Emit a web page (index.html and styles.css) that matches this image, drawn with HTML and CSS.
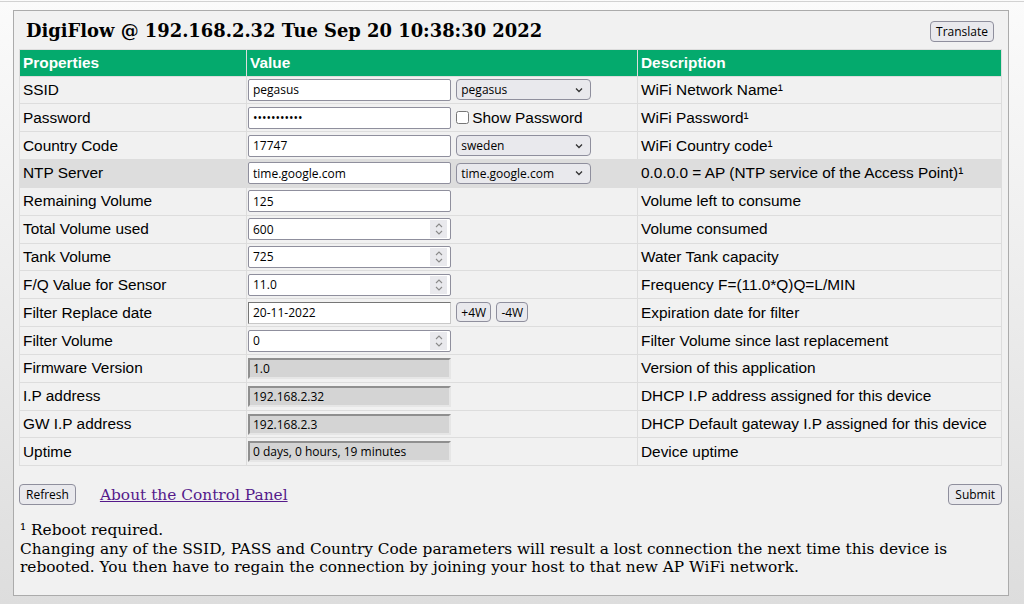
FILE: index.html
```html
<!DOCTYPE html>
<html lang="en">
<head>
<meta charset="utf-8"/>
<meta name="viewport" content="width=device-width, initial-scale=1.0"/>
<title>DigiFlow Control Panel</title>
<link rel="stylesheet" href="styles.css">
</head>
<body>
  <div class="panel">
    <div class="bar">
      <h1>DigiFlow @ 192.168.2.32 Tue Sep 20 10:38:30 2022</h1>
      <button class="btn tr">Translate</button>
    </div>
    <form id="settings">
      <table class="settings">
        <colgroup>
          <col class="c-prop"><col class="c-val"><col class="c-desc">
        </colgroup>
        <thead>
          <tr><th>Properties</th><th>Value</th><th>Description</th></tr>
        </thead>
        <tbody>
          <tr>
            <td>SSID</td>
            <td class="val">
              <input class="field" type="text" name="ssid" value="pegasus">
              <span class="sel"><select name="ssidList"><option>pegasus</option></select><svg width="10" height="6" viewBox="0 0 10 6"><path d="M2 1.5l3 3 3-3" fill="none" stroke="#333" stroke-width="1.3"/></svg></span>
            </td>
            <td>WiFi Network Name¹</td>
          </tr>
          <tr>
            <td>Password</td>
            <td class="val">
              <input class="field" type="password" name="pass" value="abcdefghijk">
              <label class="check"><input type="checkbox" onclick="togglePass(this)">Show Password</label>
            </td>
            <td>WiFi Password¹</td>
          </tr>
          <tr>
            <td>Country Code</td>
            <td class="val">
              <input class="field" type="text" name="country" value="17747">
              <span class="sel"><select name="countryList"><option>sweden</option></select><svg width="10" height="6" viewBox="0 0 10 6"><path d="M2 1.5l3 3 3-3" fill="none" stroke="#333" stroke-width="1.3"/></svg></span>
            </td>
            <td>WiFi Country code¹</td>
          </tr>
          <tr class="hot">
            <td>NTP Server</td>
            <td class="val">
              <input class="field" type="text" name="ntp" value="time.google.com">
              <span class="sel"><select name="ntpList"><option>time.google.com</option></select><svg width="10" height="6" viewBox="0 0 10 6"><path d="M2 1.5l3 3 3-3" fill="none" stroke="#333" stroke-width="1.3"/></svg></span>
            </td>
            <td>0.0.0.0 = AP (NTP service of the Access Point)¹</td>
          </tr>
          <tr>
            <td>Remaining Volume</td>
            <td class="val"><input class="field" type="text" name="remaining" value="125"></td>
            <td>Volume left to consume</td>
          </tr>
          <tr>
            <td>Total Volume used</td>
            <td class="val"><span class="num"><input type="text" name="used" value="600"><span class="spin"><svg width="10" height="14" viewBox="0 0 10 14"><path d="M2 5l3-3 3 3M2 9l3 3 3-3" fill="none" stroke="#8a8a8a" stroke-width="1.1"/></svg></span></span></td>
            <td>Volume consumed</td>
          </tr>
          <tr>
            <td>Tank Volume</td>
            <td class="val"><span class="num"><input type="text" name="tank" value="725"><span class="spin"><svg width="10" height="14" viewBox="0 0 10 14"><path d="M2 5l3-3 3 3M2 9l3 3 3-3" fill="none" stroke="#8a8a8a" stroke-width="1.1"/></svg></span></span></td>
            <td>Water Tank capacity</td>
          </tr>
          <tr>
            <td>F/Q Value for Sensor</td>
            <td class="val"><span class="num"><input type="text" name="fq" value="11.0"><span class="spin"><svg width="10" height="14" viewBox="0 0 10 14"><path d="M2 5l3-3 3 3M2 9l3 3 3-3" fill="none" stroke="#8a8a8a" stroke-width="1.1"/></svg></span></span></td>
            <td>Frequency F=(11.0*Q)Q=L/MIN</td>
          </tr>
          <tr>
            <td>Filter Replace date</td>
            <td class="val">
              <input class="field date" type="text" name="filterDate" value="20-11-2022">
              <button type="button" class="btn small">+4W</button>
              <button type="button" class="btn small">-4W</button>
            </td>
            <td>Expiration date for filter</td>
          </tr>
          <tr>
            <td>Filter Volume</td>
            <td class="val"><span class="num"><input type="text" name="filterVol" value="0"><span class="spin"><svg width="10" height="14" viewBox="0 0 10 14"><path d="M2 5l3-3 3 3M2 9l3 3 3-3" fill="none" stroke="#8a8a8a" stroke-width="1.1"/></svg></span></span></td>
            <td>Filter Volume since last replacement</td>
          </tr>
          <tr>
            <td>Firmware Version</td>
            <td class="val"><input class="field ro" type="text" value="1.0" disabled></td>
            <td>Version of this application</td>
          </tr>
          <tr>
            <td>I.P address</td>
            <td class="val"><input class="field ro" type="text" value="192.168.2.32" disabled></td>
            <td>DHCP I.P address assigned for this device</td>
          </tr>
          <tr>
            <td>GW I.P address</td>
            <td class="val"><input class="field ro" type="text" value="192.168.2.3" disabled></td>
            <td>DHCP Default gateway I.P assigned for this device</td>
          </tr>
          <tr>
            <td>Uptime</td>
            <td class="val"><input class="field ro" type="text" value="0 days, 0 hours, 19 minutes" disabled></td>
            <td>Device uptime</td>
          </tr>
        </tbody>
      </table>
      <div class="actions">
        <div class="left">
          <button type="button" class="btn">Refresh</button>
          <a href="#about" class="about">About the Control Panel</a>
        </div>
        <button type="submit" class="btn">Submit</button>
      </div>
    </form>
    <p class="note">¹ Reboot required.<br>Changing any of the SSID, PASS and Country Code parameters will result a lost connection the next time this device is rebooted. You then have to regain the connection by joining your host to that new AP WiFi network.</p>
  </div>
  <script>
    function togglePass(box) {
      document.querySelector("input[name=pass]").type = box.checked ? "text" : "password";
    }
  </script>
</body>
</html>
```

FILE: styles.css
```css
html {
  padding-top: 1px;
  background: linear-gradient(to bottom, #fbfbfb, #dddddd);
  min-height: 100%;
}
body {
  margin: 0;
  border-top: 1px solid #d2d2d2;
  font-family: "DejaVu Serif", serif;
  color: #000;
}
.panel {
  margin: 8px 0 0 13px;
  border: 1px solid #ababab;
  background: #f1f1f1;
  padding: 0 6px;
  box-sizing: border-box;
  width: 996px;
}
.bar {
  display: flex;
  justify-content: space-between;
  align-items: center;
  padding: 9px 8px 7px 6px;
}
.bar h1 {
  margin: 0;
  font-size: 17.9px;
  line-height: 22px;
  font-weight: bold;
}
.btn {
  font-family: "Open Sans", sans-serif;
  font-size: 12px;
  height: 21px;
  padding: 0 6px;
  background: #e9e9ed;
  border: 1px solid #8f8f9d;
  border-radius: 4px;
  color: #000;
  cursor: pointer;
}
.btn.tr {
  padding: 0 5px;
}
.btn.small {
  height: 20px;
  padding: 0 4px;
  margin-left: 1px;
}
table.settings {
  width: 982px;
  margin-left: -1px;
  border-collapse: collapse;
  table-layout: fixed;
  font-family: "Liberation Sans", Arial, sans-serif;
  font-size: 15.4px;
}
.c-prop { width: 227px; }
.c-val { width: 391px; }
.c-desc { width: 364px; }
.settings th, .settings td {
  border: 1px solid #dddddd;
  padding: 0 3px;
  text-align: left;
  white-space: nowrap;
  line-height: 18px;
  vertical-align: middle;
}
.settings th {
  background: #04aa6d;
  color: #fff;
  height: 25.5px;
  font-weight: bold;
}
.settings td {
  height: 26.85px;
}
.settings td.val {
  padding: 0 1px;
}
.settings tr.hot td {
  background: #dddddd;
}
.field {
  width: 203px;
  height: 22px;
  box-sizing: border-box;
  border: 1px solid #8f8f9d;
  border-radius: 2px;
  padding: 0 4px;
  font-family: "Open Sans", sans-serif;
  font-size: 12px;
  background: #fff;
  color: #000;
  vertical-align: middle;
}
.field.date {
  border-color: #767676 #c8c8c8 #c8c8c8 #767676;
  border-radius: 0;
}
.field.ro {
  background: #d4d4d4;
  border: 2px solid;
  border-color: #8f8f8f #e6e6e6 #e6e6e6 #8f8f8f;
  border-radius: 0;
  padding: 0 3px;
  height: 21px;
  color: #000;
}
.sel {
  display: inline-flex;
  align-items: center;
  width: 135px;
  height: 21px;
  margin-left: 1px;
  box-sizing: border-box;
  border: 1px solid #8f8f9d;
  border-radius: 4px;
  background: #e9e9ed;
  vertical-align: middle;
  padding-right: 6px;
}
.sel select {
  appearance: none;
  -webkit-appearance: none;
  border: none;
  background: transparent;
  flex: 1;
  min-width: 0;
  font-family: "Open Sans", sans-serif;
  font-size: 12px;
  color: #000;
  padding: 0 4px;
  outline: none;
}
.num {
  display: inline-flex;
  align-items: center;
  width: 203px;
  height: 22px;
  box-sizing: border-box;
  border: 1px solid #8f8f9d;
  border-radius: 2px;
  background: #fff;
  vertical-align: middle;
  padding-right: 3px;
}
.num input {
  flex: 1;
  min-width: 0;
  border: none;
  outline: none;
  background: transparent;
  font-family: "Open Sans", sans-serif;
  font-size: 12px;
  padding: 0 4px;
  color: #000;
}
.spin {
  display: flex;
  align-items: center;
  justify-content: center;
  width: 17px;
  height: 18px;
  background: #e9e9ed;
}
.check {
  font-size: 15.4px;
  vertical-align: middle;
}
.check input {
  margin: 0 3px 0 1px;
  width: 13px;
  height: 13px;
  vertical-align: -1px;
}
.actions {
  display: flex;
  justify-content: space-between;
  align-items: center;
  margin-top: 18px;
  margin-left: -1px;
}
.left {
  display: flex;
  align-items: center;
}
.about {
  margin-left: 24px;
  font-size: 15.4px;
  color: #551a8b;
}
.note {
  margin: 16px 0 0;
  padding-bottom: 18px;
  font-size: 15.35px;
  line-height: 18.5px;
}
```
